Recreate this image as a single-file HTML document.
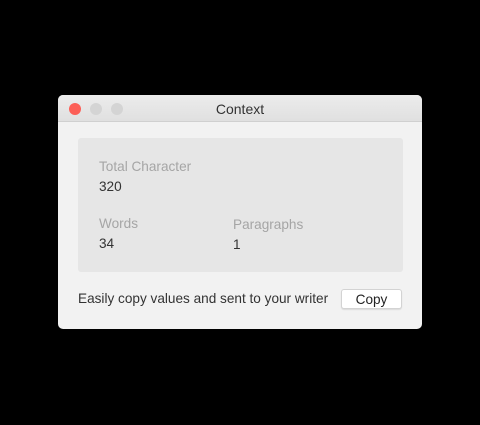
<!DOCTYPE html>
<html><head><style>
body{margin:0;width:480px;height:425px;background:#000;position:relative;font-family:"Liberation Sans",sans-serif;overflow:hidden}
.win{position:absolute;left:58px;top:95px;width:364px;height:234px;background:#f2f2f2;border-radius:5px;overflow:hidden}
.tb{height:26px;background:linear-gradient(#ececec,#e0e0e0);border-bottom:1px solid #d0d0d0;text-align:center;line-height:28px;font-size:14px;color:#333}
.dot{position:absolute;top:8px;width:12px;height:12px;border-radius:50%;background:#d4d4d4}
.panel{position:absolute;left:20px;top:43px;width:325px;height:134px;background:#e6e6e6;border-radius:3px}
.t{position:absolute;font-size:13.6px}
.l{color:#a5a5a5}.v{color:#333}
.btn{position:absolute;left:283px;top:194px;width:61px;height:20px;background:#fff;border:1px solid #d3d3d3;border-radius:3px;font-size:13.6px;text-align:center;line-height:20px;color:#222;box-sizing:border-box;box-shadow:0 1px 1px rgba(0,0,0,.1)}
</style></head><body>
<div class="win">
<div class="tb">Context</div>
<div class="dot" style="left:11px;background:#fc5f57"></div>
<div class="dot" style="left:32px"></div>
<div class="dot" style="left:53px"></div>
<div class="panel">
<div class="t l" style="left:21px;top:21px">Total Character</div>
<div class="t v" style="left:21px;top:41px">320</div>
<div class="t l" style="left:21px;top:78px">Words</div>
<div class="t v" style="left:21px;top:98px">34</div>
<div class="t l" style="left:155px;top:79px">Paragraphs</div>
<div class="t v" style="left:155px;top:99px">1</div>
</div>
<div class="t v" style="left:20px;top:196px">Easily copy values and sent to your writer</div>
<div class="btn">Copy</div>
</div>
</body></html>
